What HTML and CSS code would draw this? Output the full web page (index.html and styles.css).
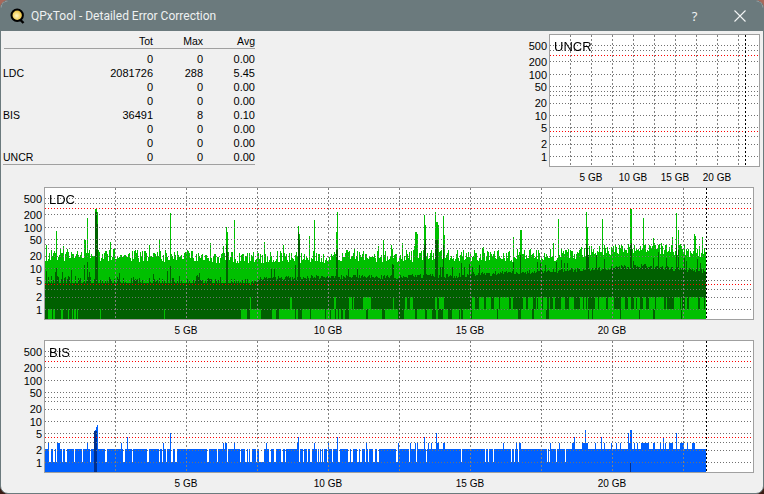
FILE: index.html
```html
<!DOCTYPE html>
<html lang="en">
<head>
<meta charset="utf-8">
<title>QPxTool - Detailed Error Correction</title>
<link rel="stylesheet" href="styles.css">
</head>
<body>
<div class="window">
  <header class="titlebar">
    <svg class="appicon" viewBox="0 0 16 16" width="16" height="16" aria-hidden="true">
      <defs><radialGradient id="q" cx="0.45" cy="0.55" r="0.6"><stop offset="0" stop-color="#fff6c8"/><stop offset="0.6" stop-color="#f2cf5a"/><stop offset="1" stop-color="#c89a2a"/></radialGradient></defs>
      <path d="M10 11.5l3.5 3.5" stroke="#000" stroke-width="2.4" fill="none"/>
      <circle cx="7.2" cy="7.2" r="5.7" fill="url(#q)" stroke="#000" stroke-width="2"/>
    </svg>
    <span class="apptitle">QPxTool - Detailed Error Correction</span>
    <span class="winbtn help">?</span>
    <span class="winbtn close"><svg viewBox="0 0 12 12" width="12" height="12" aria-hidden="true"><path d="M.5.5l11 11M11.5.5l-11 11" stroke="#f2f4f4" stroke-width="1.1" fill="none"/></svg></span>
  </header>
  <main class="content">
    <section class="toprow">
      <div class="stats">
        <div class="row head"><span></span><span>Tot</span><span>Max</span><span>Avg</span></div>
        <div class="rows">
          <div class="row"><span></span><span>0</span><span>0</span><span>0.00</span></div>
          <div class="row"><span>LDC</span><span>2081726</span><span>288</span><span>5.45</span></div>
          <div class="row"><span></span><span>0</span><span>0</span><span>0.00</span></div>
          <div class="row"><span></span><span>0</span><span>0</span><span>0.00</span></div>
          <div class="row"><span>BIS</span><span>36491</span><span>8</span><span>0.10</span></div>
          <div class="row"><span></span><span>0</span><span>0</span><span>0.00</span></div>
          <div class="row"><span></span><span>0</span><span>0</span><span>0.00</span></div>
          <div class="row"><span>UNCR</span><span>0</span><span>0</span><span>0.00</span></div>
        </div>
      </div>
      <div class="chart small">
        <div class="yaxis"><span>500</span><span>200</span><span>100</span><span>50</span><span>20</span><span>10</span><span>5</span><span>2</span><span>1</span></div>
        <div class="plot"><canvas data-kind="uncr" width="209" height="131"></canvas><span class="plotname">UNCR</span></div>
        <div class="xaxis"><span>5 GB</span><span>10 GB</span><span>15 GB</span><span>20 GB</span></div>
      </div>
    </section>
    <section class="chart wide">
      <div class="yaxis"><span>500</span><span>200</span><span>100</span><span>50</span><span>20</span><span>10</span><span>5</span><span>2</span><span>1</span></div>
      <div class="plot"><canvas data-kind="ldc" width="708" height="131"></canvas><span class="plotname">LDC</span></div>
      <div class="xaxis"><span>5 GB</span><span>10 GB</span><span>15 GB</span><span>20 GB</span></div>
    </section>
    <section class="chart wide">
      <div class="yaxis"><span>500</span><span>200</span><span>100</span><span>50</span><span>20</span><span>10</span><span>5</span><span>2</span><span>1</span></div>
      <div class="plot"><canvas data-kind="bis" width="708" height="131"></canvas><span class="plotname">BIS</span></div>
      <div class="xaxis"><span>5 GB</span><span>10 GB</span><span>15 GB</span><span>20 GB</span></div>
    </section>
  </main>
</div>
<script src="app.js"></script>
</body>
</html>
```
FILE: styles.css
```css
* { box-sizing: border-box; }
html, body { margin: 0; height: 100%; }
body {
  background: linear-gradient(#a8685a, #3a1c14);
  font-family: "Liberation Sans", Arial, sans-serif;
  font-size: 11px;
  color: #000;
  overflow: hidden;
}
.window {
  width: 764px;
  height: 494px;
  border: 1px solid #6b7a7d;
  border-radius: 8px;
  background: #f0f0f0;
  overflow: hidden;
  display: flex;
  flex-direction: column;
}
.titlebar {
  flex: none;
  height: 30px;
  background: #6b7a7d;
  display: flex;
  align-items: center;
  padding: 0 1px 1px 9px;
  color: #eef1f1;
}
.appicon { flex: none; }
.apptitle {
  margin-left: 5px;
  font-family: Roboto, sans-serif;
  font-size: 12px;
  flex: 1;
}
.winbtn {
  width: 45px;
  display: flex;
  justify-content: center;
  align-items: center;
}
.help { font-family: "Noto Sans", sans-serif; font-size: 13px; }
.content {
  flex: 1;
  display: flex;
  flex-direction: column;
  padding: 3px 3px 0 2px;
}
.toprow {
  display: flex;
  justify-content: space-between;
  align-items: flex-start;
  height: 153px;
}
.stats { width: 252px; }
.row {
  display: grid;
  grid-template-columns: 100px 50px 50px 52px;
  height: 14px;
  line-height: 14px;
}
.row span { text-align: right; }
.row span:first-child { text-align: left; font-size: 10.5px; }
.row.head {
  font-size: 10.5px;
  height: 15px;
  border-bottom: 1px solid #a0a0a0;
  margin-left: 1px;
  margin-bottom: 3px;
  grid-template-columns: 99px 50px 50px 52px;
}
.rows { border-bottom: 1px solid #a0a0a0; margin-left: 0; }

.chart {
  display: grid;
  grid-template-rows: 133px 20px;
}
.chart.wide { grid-template-columns: 41px 710px; }
.chart.small { grid-template-columns: 30px 211px; }
.yaxis {
  display: grid;
  grid-template-rows: 16px 13px 12px 16px 13px 12px 16px 13px 12px;
  padding-top: 6px;
  padding-right: 2px;
  text-align: right;
  line-height: 12px;
}
.plot {
  position: relative;
  border: 1px solid #a0a0a0;
  background: #fff;
}
.plot canvas { display: block; }
.plotname {
  position: absolute;
  left: 4px;
  top: 4px;
  font-size: 13px;
  line-height: 16px;
}
.xaxis {
  grid-column: 2;
  display: flex;
  font-size: 10px;
  padding-top: 5px;
  line-height: 12px;
  text-align: center;
}
.wide .xaxis { padding-left: 71px; }
.wide .xaxis span { width: 142px; }
.small .xaxis { padding-left: 21px; }
.small .xaxis span { width: 42px; }
```
FILE: app.js
```js
(function () {
  var seed = 12345;
  function rnd() {
    seed |= 0; seed = seed + 0x6D2B79F5 | 0;
    var t = Math.imul(seed ^ seed >>> 15, 1 | seed);
    t = t + Math.imul(t ^ t >>> 7, 61 | t) ^ t;
    return ((t ^ t >>> 14) >>> 0) / 4294967296;
  }
  function lerp(pts, x) {
    for (var i = 1; i < pts.length; i++) {
      if (x <= pts[i][0]) {
        var a = pts[i - 1], b = pts[i];
        return a[1] + (b[1] - a[1]) * (x - a[0]) / (b[0] - a[0]);
      }
    }
    return pts[pts.length - 1][1];
  }
  var TICKS = [10, 15, 26, 39, 51, 56, 60, 68, 80, 92, 101, 109, 121];
  var REDS = [20, 96];

  function grid(ctx, w, h, vx, endX) {
    ctx.lineWidth = 1;
    ctx.setLineDash([1, 2]);
    ctx.strokeStyle = '#707070';
    TICKS.forEach(function (y) {
      ctx.beginPath(); ctx.moveTo(0, y + 0.5); ctx.lineTo(w, y + 0.5); ctx.stroke();
    });
    ctx.strokeStyle = '#808080';
    ctx.setLineDash([2, 2]);
    vx.forEach(function (x) {
      ctx.beginPath(); ctx.moveTo(x + 0.5, 0); ctx.lineTo(x + 0.5, h); ctx.stroke();
    });
    ctx.setLineDash([1, 2]);
    ctx.strokeStyle = '#ff0000';
    REDS.forEach(function (y) {
      ctx.beginPath(); ctx.moveTo(0, y + 0.5); ctx.lineTo(w, y + 0.5); ctx.stroke();
    });
    ctx.strokeStyle = '#000';
    ctx.setLineDash([2, 2]);
    ctx.beginPath(); ctx.moveTo(endX + 0.5, 0); ctx.lineTo(endX + 0.5, h); ctx.stroke();
  }

  var OX = 45, OY = 188, BOTTOM = 319;
  var wideV = [115, 186, 257, 328, 399, 470, 541, 612, 683].map(function (x) { return x - OX; });

  function drawLDC(ctx) {
    var spikes = {46:245,56:231,84:239,85:240,87:218,95:209,96:209,97:212,110:242,159:239,170:213,210:243,226:227,227:232,234:220,
      264:242,298:226,299:234,309:236,314:220,336:232,337:212,378:246,383:240,391:245,402:243,415:232,416:232,417:234,424:215,425:225,
      435:212,436:222,437:222,438:225,443:216,444:235,513:237,520:230,521:230,558:219,586:212,587:227,602:219,630:209,631:209,643:218,
      653:238,672:237,676:213,678:230,694:234,695:236,702:237};
    var darkSpikes = {95:212,96:212,97:224,87:262,84:265,56:268,170:266,226:245,227:252,298:232,299:240,336:250,337:249,424:245,425:240,
      435:240,436:240,437:240,443:245,586:244,587:248,630:245,631:243,676:245,678:250,520:255,513:262};
    var lightBase = [[45,255],[100,255],[160,256],[260,257],[400,256],[470,256],[560,255],[600,250],[650,248],[700,252]];
    var darkBase = [[45,283],[250,283],[262,278],[450,276],[480,274],[560,271],[640,266],[705,271]];
    var b1 = false, b2 = false;
    for (var x = 45; x <= 705; x++) {
      var top = lerp(lightBase, x) + Math.round(rnd() * 12 - 6);
      if (rnd() < 0.06) top -= 4 + rnd() * 6;
      top = Math.round(top);
      if (spikes[x]) top = spikes[x];
      ctx.fillStyle = '#00c000';
      ctx.fillRect(x - OX, top - OY, 1, BOTTOM - top);

      var dt = lerp(darkBase, x);
      var n = rnd();
      if (x < 250) { dt -= n < 0.5 ? 0 : Math.round(rnd() * 7); if (n > 0.96) dt -= 6; }
      else { dt += Math.round(rnd() * 4 - 2); if (n > 0.92) dt -= Math.round(4 + rnd() * 9); }
      dt = Math.round(dt);
      if (darkSpikes[x]) dt = darkSpikes[x];
      ctx.fillStyle = '#006000';
      ctx.fillRect(x - OX, dt - OY, 1, BOTTOM - dt);

      var p1 = x < 250 ? 0 : x < 470 ? 0.1 : 0.58;
      var p2 = x < 240 ? 0.13 : x < 470 ? 0.74 : 0.9;
      if (rnd() < 0.6) b1 = rnd() < p1;
      if (rnd() < 0.6) b2 = rnd() < p2;
      ctx.fillStyle = '#00c000';
      if (b1 && p1 > 0) ctx.fillRect(x - OX, 297 - OY, 1, 12);
      if (b2) ctx.fillRect(x - OX, 309 - OY, 1, 10);
    }
  }

  function drawBIS(ctx) {
    var BO = 341, BB = 472, Y1 = 462, Y2 = 449;
    var tall = {127:437,170:433,95:430,96:427,97:425,94:433,298:437,337:437,424:437,436:433,574:437,585:430,601:437,628:433,630:430,631:430,663:437,676:433};
    var three = [48,57,58,59,87,121,163,223,225,226,234,266,297,314,328,366,398,410,415,417,428,431,437,438,443,444,503,516,519,520,550,559,
      572,573,582,583,584,586,587,595,604,611,616,620,629,634,637,641,642,643,644,645,646,647,648,653,654,660,665,669,670,671,672,680,681,682,683,687,692,693,694];
    var gaps = {};
    for (var g = 45; g < 440; g++) {
      if (g > 92 && g < 100) continue;
      if (rnd() < 0.19) { gaps[g] = 1; if (rnd() < 0.4) gaps[g + 1] = 1; }
    }
    [461,485,488,493,511,514,518,547,549,556,565].forEach(function (k) { gaps[k] = 1; });
    ctx.fillStyle = '#0060ff';
    for (var x = 45; x <= 705; x++) {
      var top = gaps[x] ? Y1 : Y2;
      if (three.indexOf(x) >= 0) top = 443;
      if (tall[x]) top = tall[x];
      ctx.fillRect(x - OX, top - BO, 1, BB - top);
    }
    ctx.fillStyle = '#003090';
    ctx.fillRect(94 - OX, 431 - BO, 3, BB - 431);
    ctx.fillRect(630 - OX, 463 - BO, 1, 9);
  }

  document.querySelectorAll('canvas').forEach(function (c) {
    var ctx = c.getContext('2d');
    var kind = c.dataset.kind;
    if (kind === 'ldc') { drawLDC(ctx); grid(ctx, c.width, c.height, wideV, 706 - OX); }
    else if (kind === 'bis') { drawBIS(ctx); grid(ctx, c.width, c.height, wideV, 706 - OX); }
    else {
      var v = [570, 591, 612, 633, 654, 675, 696, 717, 738].map(function (x) { return x - 550; });
      grid(ctx, c.width, c.height, v, 745 - 550);
    }
  });
})();
```
